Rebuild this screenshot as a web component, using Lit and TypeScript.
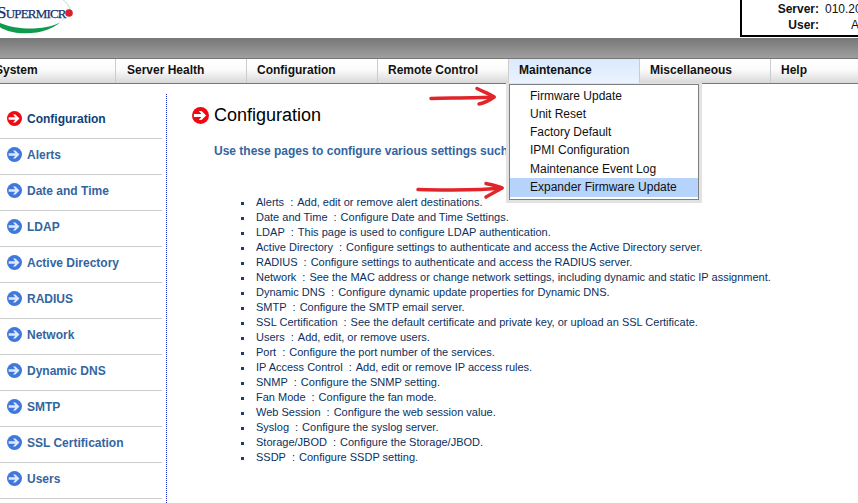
import { LitElement, html, css, svg } from "lit";
import { customElement } from "lit/decorators.js";

const NAV = ["System", "Server Health", "Configuration", "Remote Control", "Maintenance", "Miscellaneous", "Help"];
const SIDE = ["Configuration", "Alerts", "Date and Time", "LDAP", "Active Directory", "RADIUS", "Network", "Dynamic DNS", "SMTP", "SSL Certification", "Users"];
const MENU = ["Firmware Update", "Unit Reset", "Factory Default", "IPMI Configuration", "Maintenance Event Log", "Expander Firmware Update"];
const LIST: [string, string][] = [
  ["Alerts", "Add, edit or remove alert destinations."],
  ["Date and Time", "Configure Date and Time Settings."],
  ["LDAP", "This page is used to configure LDAP authentication."],
  ["Active Directory", "Configure settings to authenticate and access the Active Directory server."],
  ["RADIUS", "Configure settings to authenticate and access the RADIUS server."],
  ["Network", "See the MAC address or change network settings, including dynamic and static IP assignment."],
  ["Dynamic DNS", "Configure dynamic update properties for Dynamic DNS."],
  ["SMTP", "Configure the SMTP email server."],
  ["SSL Certification", "See the default certificate and private key, or upload an SSL Certificate."],
  ["Users", "Add, edit, or remove users."],
  ["Port", "Configure the port number of the services."],
  ["IP Access Control", "Add, edit or remove IP access rules."],
  ["SNMP", "Configure the SNMP setting."],
  ["Fan Mode", "Configure the fan mode."],
  ["Web Session", "Configure the web session value."],
  ["Syslog", "Configure the syslog server."],
  ["Storage/JBOD", "Configure the Storage/JBOD."],
  ["SSDP", "Configure SSDP setting."],
];

const arrowIcon = (red: boolean, size: number) => html`<svg class="ico" width=${size} height=${size} viewBox="0 0 16 16">
  <circle cx="8" cy="8" r="8" fill=${red ? "#ee0a14" : "#3f78dc"}></circle>
  <path d="M1.800 6.700H8.800L6.400 3.700H9L13.300 8 9 12.300H6.400L8.800 9.300H1.800Z" fill=${red ? "#fff" : "#dfe8fa"}></path>
</svg>`;

@customElement("app-root")
export class AppRoot extends LitElement {
  static styles = css`
    :host {
      display: block;
      width: 858px;
      height: 503px;
      overflow: hidden;
      position: relative;
      background: #fff;
      font-family: "Liberation Sans", Arial, sans-serif;
    }
    .top { height: 38px; position: relative; overflow: hidden; display: flex; justify-content: flex-end; }
    .logo { position: absolute; left: 0; top: 0; }
    .logotext {
      position: absolute; left: -3px; top: 5px;
      font: 400 13px/16px "Liberation Serif", serif;
      color: #15306e; letter-spacing: -0.8px; white-space: nowrap;
      -webkit-text-stroke: 0.25px #15306e;
    }
    .logotext .cap { font-size: 17px; }
    .info {
      width: 116px; height: 34px; margin-top: -1px; box-sizing: content-box;
      border-left: 2px solid #000; border-bottom: 2px solid #000;
      display: grid; grid-template-columns: 77px 1fr; column-gap: 6px;
      grid-auto-rows: 16px; padding-top: 2px; overflow: hidden;
      font-size: 12px; line-height: 16px; color: #111; white-space: nowrap;
    }
    .info b { text-align: right; }
    .info .u { padding-left: 26px; }
    .band { height: 20px; background: linear-gradient(#777, #9f9f9f); }
    .nav {
      height: 24px; display: flex; margin-left: -15px; width: 900px;
      border-top: 1px solid #777; border-bottom: 1px solid #777;
      background: linear-gradient(#fff 0%, #fbfbfb 45%, #d8d8d8 100%);
    }
    .nav div {
      flex: none; width: 120px; padding-left: 10px; border-right: 1px solid #ccc;
      font-size: 12px; font-weight: 700; line-height: 23px; color: #111; white-space: nowrap;
    }
    .nav div:nth-child(2) { width: 119px; padding-left: 11px; }
    .nav div.on { background: linear-gradient(#dbe9fd, #eaf3fe); }
    .main { display: flex; height: 418px; }
    .side { width: 162px; flex: none; padding-top: 19px; }
    .side .row {
      height: 31px; padding-bottom: 4px; border-bottom: 1px solid #ccc; display: flex; align-items: center; gap: 5px; padding-left: 7px;
      font-size: 12px; font-weight: 700; color: #34659f; white-space: nowrap;
    }
    .side .row.on { color: #0f3f78; }
    .ico { flex: none; display: block; }
    .rule { width: 0; margin: 10px 0 0 4px; border-left: 1.5px dotted #2233dd; height: 409px; flex: none; }
    .content { padding-left: 25px; flex: 1; min-width: 0; }
    .head { display: flex; align-items: center; gap: 5px; margin-top: 22px; height: 18px; font-size: 18px; color: #000; line-height: 18px; }
    .sub { margin: 19px 0 0 22px; font-size: 12px; font-weight: 700; line-height: 16px; color: #34659f; white-space: nowrap; }
    ul { margin: 36px 0 0; padding: 0 0 0 64px; list-style: none; }
    li { height: 15px; line-height: 15px; font-size: 11px; color: #0b3060; white-space: nowrap; position: relative; }
    li::before { content: ""; position: absolute; left: -15px; top: 7px; width: 3px; height: 3px; background: #1f3a78; }
    .sep { margin: 0 4px 0 6px; }
    .menu {
      position: absolute; left: 509px; top: 84px; width: 188px;
      background: #fff; border: 1px solid #7f7f7f; box-shadow: 0 0 0 3px #e2e2e2;
      clip-path: inset(-1px -5px -5px -4px);
      padding-top: 2px; box-sizing: content-box;
      height: 112px;
    }
    .menu div { height: 18px; line-height: 18px; padding-left: 20px; font-size: 12px; color: #111; white-space: nowrap; }
    .menu div:nth-child(5) { margin-top: 1px; }
    .menu div.on { background: #b5d3fb; height: 19px; }
    .marks { position: absolute; left: 0; top: 0; pointer-events: none; }
  `;

  render() {
    return html`
      <div class="top">
        <svg class="logo" width="80" height="38" viewBox="0 0 80 38">
          <path d="M-4 24C8 37 50 38 65 17 59 30 18 33 -4 21Z" fill="#0f9a4e"></path>
          <path d="M62 -1C67 3 70 7 70 10" fill="none" stroke="#a9dcc0" stroke-width="1"></path>
        </svg>
        <div class="logotext"><span class="cap">S</span>UPERMICR</div>
        <svg class="logo" width="80" height="38" viewBox="0 0 80 38"><circle cx="69" cy="13" r="3.8" fill="#d9202c"></circle></svg>
        <div class="info">
          <b>Server:</b><span>010.20</span>
          <b>User:</b><span class="u">A</span>
        </div>
      </div>
      <div class="band"></div>
      <div class="nav">
        ${NAV.map((n) => html`<div class=${n === "Maintenance" ? "on" : ""}>${n}</div>`)}
      </div>
      <div class="main">
        <div class="side">
          ${SIDE.map((s, i) => html`<div class="row ${i === 0 ? "on" : ""}">${arrowIcon(i === 0, 15)}<span>${s}</span></div>`)}
        </div>
        <div class="rule"></div>
        <div class="content">
          <div class="head">${arrowIcon(true, 17)}<span>Configuration</span></div>
          <div class="sub">Use these pages to configure various settings such as</div>
          <ul>
            ${LIST.map(([a, b]) => html`<li>${a}<span class="sep">:</span>${b}</li>`)}
          </ul>
        </div>
      </div>
      <div class="menu">
        ${MENU.map((m, i) => html`<div class=${i === 5 ? "on" : ""}>${m}</div>`)}
      </div>
      <svg class="marks" width="858" height="503" viewBox="0 0 858 503">
        ${svg`<g fill="none" stroke="#e2252b" stroke-width="3.500" stroke-linecap="round" stroke-linejoin="round">
          <path d="M431 98.500C450 98 475 98 494 97"></path>
          <path d="M477 88.500C484 92 490 94 494 97 490 100 484 103 479 104"></path>
          <path d="M418 189.500C445 190 475 191 502 188"></path>
          <path d="M486 183.500C492 185 498 186 502 188 497 191 491 194 486 197"></path>
        </g>`}
      </svg>
    `;
  }
}
